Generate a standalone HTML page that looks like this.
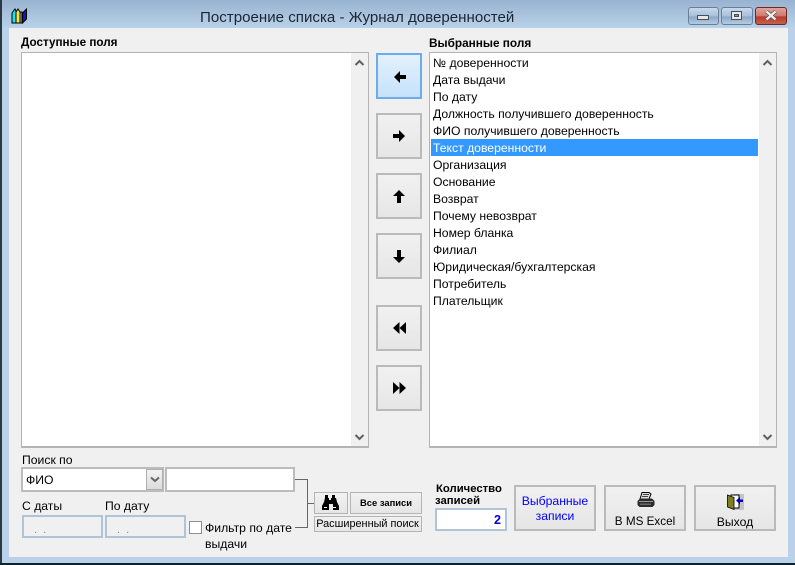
<!DOCTYPE html>
<html><head><meta charset="utf-8"><style>
html,body{margin:0;padding:0}
body{width:795px;height:565px;overflow:hidden;position:relative;background:#b9d2ea;font-family:"Liberation Sans",sans-serif;font-size:12.200px;color:#000}
.a{position:absolute;box-sizing:border-box}
.t{position:absolute;white-space:nowrap;line-height:14px}
.btn{position:absolute;box-sizing:border-box;border:2px solid #bababa;background:linear-gradient(#f1f1f1,#e6e6e6);text-align:center}
.list{position:absolute;box-sizing:border-box;background:#fff;border:2px solid #b4b4b4;border-width:1px 2px 2px 1px}
.inp{position:absolute;box-sizing:border-box;background:#fff;border:2px solid #bcbcbc}
.row{position:absolute;left:433px;white-space:nowrap;line-height:14px}
svg{position:absolute;display:block}
</style></head><body>
<div class="a" style="left:0;top:0;width:795px;height:60px;background:linear-gradient(#98b3d0,#b9d2ea 28px)"></div>
<div class="a" style="left:0;top:0;width:2px;height:565px;background:#2a3a44"></div>
<div class="a" style="left:0;top:563px;width:795px;height:2px;background:#10242c"></div>
<div class="a" style="left:9px;top:28px;width:779px;height:529px;background:#f0f0f0"></div>

<svg style="left:11px;top:8px" width="17" height="16" viewBox="0 0 17 16"><path d="M1 5l3-4 1 2v12H1z" fill="#22e0f0" stroke="#000"/><path d="M5 4l2-3 2 3v11H5z" fill="#f4e83a" stroke="#000"/><path d="M9 4h2v11H9z" fill="#bbb" stroke="#000"/><path d="M11.500 5l4-4v10l-4 4z" fill="#1414c0" stroke="#000"/></svg>

<div class="t" style="left:200px;top:9px;font-size:15.100px;line-height:17px;color:#1c2632">Построение списка - Журнал доверенностей</div>

<div class="a" style="left:688px;top:7px;width:31px;height:18px;border:1px solid #6a7f9c;border-radius:3px;background:linear-gradient(#c8d8ea,#a8c0da 50%,#8ba8c8 55%,#b4cbe2)"></div>
<div class="a" style="left:697px;top:15px;width:12px;height:5px;background:#e8e8e8;border:1px solid #45505c"></div>
<div class="a" style="left:721px;top:7px;width:32px;height:18px;border:1px solid #6a7f9c;border-radius:3px;background:linear-gradient(#c8d8ea,#a8c0da 50%,#8ba8c8 55%,#b4cbe2)"></div>
<div class="a" style="left:731px;top:11px;width:11px;height:9px;background:#e8e8e8;border:1px solid #45505c"></div>
<div class="a" style="left:734px;top:14px;width:5px;height:3px;background:#7f97b4;border:1px solid #45505c"></div>
<div class="a" style="left:755px;top:7px;width:32px;height:18px;border:1px solid #6a2a28;border-radius:3px;background:linear-gradient(#e0a49c,#d0796c 50%,#b8392b 55%,#c8604c)"></div>
<svg style="left:765px;top:10px" width="12" height="11" viewBox="0 0 12 11"><path d="M1.500 1.500L10.500 9.500M10.500 1.500L1.500 9.500" stroke="#4a4a4a" stroke-width="3.600"/><path d="M1.500 1.500L10.500 9.500M10.500 1.500L1.500 9.500" stroke="#f0f0f0" stroke-width="2.400"/></svg>

<div class="t" style="left:21px;top:36px;font-weight:bold;font-size:11.700px">Доступные поля</div>
<div class="t" style="left:429px;top:36px;font-weight:bold;font-size:11.800px">Выбранные поля</div>

<div class="list" style="left:21px;top:52px;width:348px;height:396px"></div>
<div class="a" style="left:351px;top:53px;width:17px;height:393px;background:#f0f0f0"></div>
<svg style="left:354px;top:59px" width="11" height="8"><path d="M1.500 6L5.500 2L9.500 6" fill="none" stroke="#606060" stroke-width="2"/></svg>
<svg style="left:354px;top:433px" width="11" height="8"><path d="M1.500 2L5.500 6L9.500 2" fill="none" stroke="#606060" stroke-width="2"/></svg>

<div class="list" style="left:429px;top:52px;width:348px;height:396px"></div>
<div class="a" style="left:759px;top:53px;width:17px;height:393px;background:#f0f0f0"></div>
<svg style="left:762px;top:59px" width="11" height="8"><path d="M1.500 6L5.500 2L9.500 6" fill="none" stroke="#606060" stroke-width="2"/></svg>
<svg style="left:762px;top:433px" width="11" height="8"><path d="M1.500 2L5.500 6L9.500 2" fill="none" stroke="#606060" stroke-width="2"/></svg>
<div class="a" style="left:431px;top:139px;width:327px;height:17px;background:#3399ff"></div>
<div class="row" style="top:56px">№ доверенности</div>
<div class="row" style="top:73px">Дата выдачи</div>
<div class="row" style="top:90px">По дату</div>
<div class="row" style="top:107px">Должность получившего доверенность</div>
<div class="row" style="top:124px">ФИО получившего доверенность</div>
<div class="row" style="top:141px;color:#fff">Текст доверенности</div>
<div class="row" style="top:158px">Организация</div>
<div class="row" style="top:175px">Основание</div>
<div class="row" style="top:192px">Возврат</div>
<div class="row" style="top:209px">Почему невозврат</div>
<div class="row" style="top:226px">Номер бланка</div>
<div class="row" style="top:243px">Филиал</div>
<div class="row" style="top:260px">Юридическая/бухгалтерская</div>
<div class="row" style="top:277px">Потребитель</div>
<div class="row" style="top:294px">Плательщик</div>

<div class="btn" style="left:376px;top:53px;width:46px;height:46px;border-color:#6bade8;background:linear-gradient(#e3f1fd,#c6e2fb)"></div>
<svg style="left:394px;top:71px" width="12" height="12" viewBox="0 0 12 12"><path d="M0 6L6 0v4h6v4H6v4z"/></svg>
<div class="btn" style="left:376px;top:113px;width:46px;height:46px"></div>
<svg style="left:393px;top:130px" width="12" height="12" viewBox="0 0 12 12"><path d="M12 6L6 0v4H0v4h6v4z"/></svg>
<div class="btn" style="left:376px;top:173px;width:46px;height:46px"></div>
<svg style="left:393px;top:190px" width="12" height="13" viewBox="0 0 12 13"><path d="M6 0L0 6h4v7h4V6h4z"/></svg>
<div class="btn" style="left:376px;top:233px;width:46px;height:46px"></div>
<svg style="left:393px;top:250px" width="12" height="13" viewBox="0 0 12 13"><path d="M6 13L0 7h4V0h4v7h4z"/></svg>
<div class="btn" style="left:376px;top:305px;width:46px;height:46px"></div>
<svg style="left:393px;top:322px" width="13" height="12" viewBox="0 0 13 12"><path d="M0 6L6.500 0v12zM6.500 6L13 0v12z"/></svg>
<div class="btn" style="left:376px;top:365px;width:46px;height:46px"></div>
<svg style="left:393px;top:382px" width="13" height="12" viewBox="0 0 13 12"><path d="M6.500 6L0 0v12zM13 6L6.500 0v12z"/></svg>

<div class="t" style="left:22px;top:453px">Поиск по</div>
<div class="inp" style="left:21px;top:467px;width:143px;height:25px"></div>
<div class="t" style="left:26px;top:473px">ФИО</div>
<div class="a" style="left:146px;top:469px;width:17px;height:21px;background:linear-gradient(#f2f2f2,#dcdcdc);border:1px solid #b0b0b0"></div>
<svg style="left:150px;top:476px" width="10" height="7"><path d="M1 1.500L5 5L9 1.500" fill="none" stroke="#666" stroke-width="2"/></svg>
<div class="inp" style="left:165px;top:467px;width:130px;height:25px"></div>

<div class="t" style="left:22px;top:499px">С даты</div>
<div class="t" style="left:105px;top:499px">По дату</div>
<div class="a" style="left:22px;top:515px;width:81px;height:23px;background:#f0f0f0;border:2px solid #b0c4d8"></div>
<div class="a" style="left:105px;top:515px;width:81px;height:23px;background:#f0f0f0;border:2px solid #b0c4d8"></div>
<div class="t" style="left:34px;top:523px;color:#8a8a8a;font-size:11px;word-spacing:3px">. .</div>
<div class="t" style="left:117px;top:523px;color:#8a8a8a;font-size:11px;word-spacing:3px">. .</div>
<div class="a" style="left:189px;top:521px;width:13px;height:13px;background:#fff;border:1px solid #8e8f8f"></div>
<div class="t" style="left:205px;top:521px;font-size:12.200px">Фильтр по дате</div>
<div class="t" style="left:205px;top:537px;font-size:12.200px">выдачи</div>

<div class="a" style="left:295px;top:479px;width:13px;height:1px;background:#666"></div>
<div class="a" style="left:307px;top:479px;width:1px;height:49px;background:#666"></div>
<div class="a" style="left:308px;top:503px;width:6px;height:1px;background:#666"></div>
<div class="a" style="left:295px;top:527px;width:13px;height:1px;background:#666"></div>

<div class="btn" style="left:314px;top:492px;width:34px;height:22px;border-width:1px;border-color:#b4b4b4"></div>
<svg style="left:321px;top:495px" width="18" height="15" viewBox="0 0 18 15"><path d="M4 0h3v3h1v2h2V3h1V0h3v3h1l1 4 2 4v4h-6V9H8v6H1v-4l2-4 1-4z"/><path d="M3 12h3v1H3zM12 12h3v1h-3z" fill="#fff"/></svg>
<div class="btn" style="left:350px;top:492px;width:72px;height:22px;border-width:1px;border-color:#b4b4b4;font-size:9.400px;font-weight:bold;line-height:20px">Все записи</div>
<div class="btn" style="left:314px;top:516px;width:108px;height:16px;border-width:1px;border-color:#b4b4b4;font-size:10.900px;line-height:14px;white-space:nowrap;padding-right:1px">Расширенный поиск</div>

<div class="t" style="left:436px;top:482px;font-weight:bold;font-size:11.300px">Количество</div>
<div class="t" style="left:435px;top:494px;font-weight:bold;font-size:11.300px">записей</div>
<div class="a" style="left:435px;top:508px;width:72px;height:23px;background:#fff;border:2px solid #b0c4d8;color:#0000e0;font-weight:bold;text-align:right;line-height:20px;padding-right:4px;font-size:12.500px">2</div>

<div class="btn" style="left:514px;top:485px;width:82px;height:46px;color:#0000ff;line-height:15px;padding-top:7px">Выбранные<br>записи</div>
<div class="btn" style="left:604px;top:485px;width:82px;height:46px;padding-top:28px;line-height:14px;font-size:11.700px">В MS Excel</div>
<svg style="left:637px;top:492px" width="18" height="15" viewBox="0 0 18 15"><path d="M5 .5h7l2 1.500-2 5H3z" fill="#ddd" stroke="#000"/><path d="M6 2.500h6M5 4.500h6" stroke="#444"/><path d="M3 6.500h12l2.500 2.500v4l-2 2H2.500L.5 13V9z" fill="#2c2c2c"/><path d="M2 9.500h14" stroke="#999"/><path d="M3 11.500h11v1.500H3z" fill="#666"/></svg>
<div class="btn" style="left:694px;top:485px;width:82px;height:46px;padding-top:28px;line-height:14px">Выход</div>
<svg style="left:727px;top:494px" width="17" height="16" viewBox="0 0 17 16"><rect x="7" y="0" width="10" height="16" fill="#c4c4c4"/><rect x="4" y="1" width="8" height="13" fill="#fff" stroke="#000"/><path d="M0.500 1L7 3.500V15.500L0.500 13z" fill="#808020" stroke="#000" stroke-width=".8"/><path d="M9 6.500L13 3v2.500h3v2.500h-3v2.500z" fill="#0000c8"/></svg>
</body></html>
